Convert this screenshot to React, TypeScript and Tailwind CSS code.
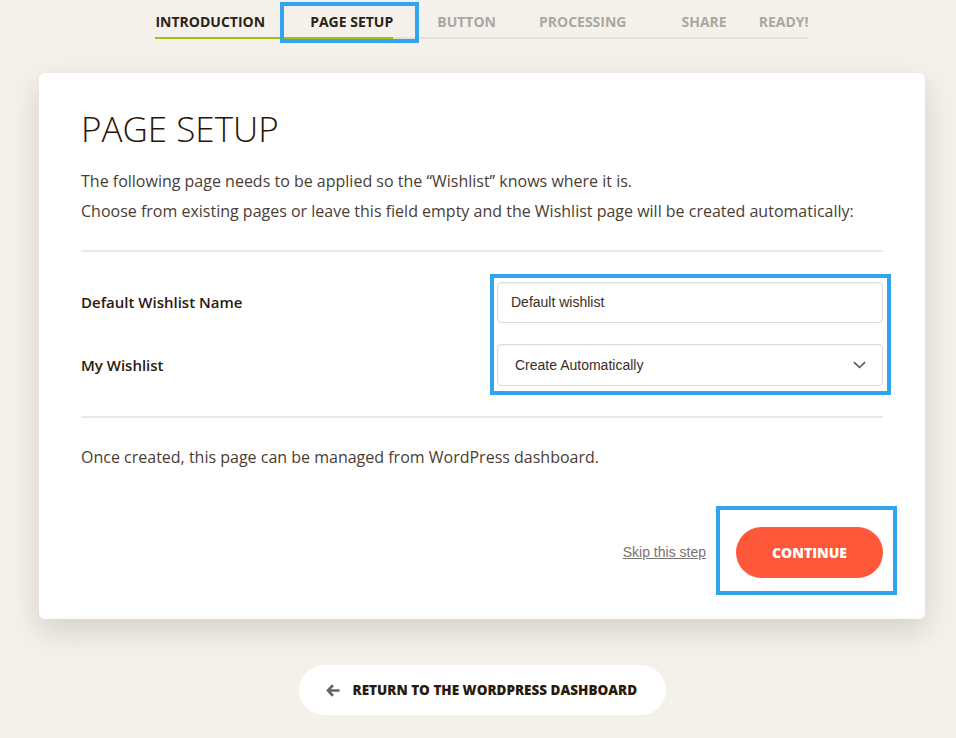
import { ReactNode } from 'react'

const steps = [
  { label: 'INTRODUCTION', pad: 'pl-0', done: true },
  { label: 'PAGE SETUP', pad: 'pl-[45px]', done: true, marked: true },
  { label: 'BUTTON', pad: 'pl-[44px]', done: false },
  { label: 'PROCESSING', pad: 'pl-[43px]', done: false },
  { label: 'SHARE', pad: 'pl-[55px]', done: false },
  { label: 'READY!', pad: 'pl-[32px]', done: false },
]

function Marker({ className }: { className: string }) {
  // blue annotation frame laid over the content
  return <span className={`pointer-events-none absolute border-4 border-[#31a4ee] ${className}`} />
}

function Row({ label, children }: { label: string; children: ReactNode }) {
  return (
    <div className="flex items-center">
      <label className="w-[416px] text-[15px] font-semibold text-[#2b1b0d]">{label}</label>
      <div className="flex-1">{children}</div>
    </div>
  )
}

export default function App() {
  return (
    <div className="min-h-[738px] bg-[#f4f1eb] font-['Open_Sans',sans-serif]">
      <div className="ml-[39px] w-[886px] pt-3">
        <nav className="flex justify-center">
          <div className="flex border-b-2 border-[#e4e2de]">
            {steps.map(step => (
              <div key={step.label} className={`${step.pad} relative -mb-[2px] border-b-2 ${step.done ? 'border-[#a7c10a]' : 'border-transparent'} pb-[5px]`}>
                <span className={`block text-[14px] font-bold leading-5 ${step.done ? 'text-[#2d2218]' : 'text-[#aaa7a3]'}`}>
                  {step.label}
                </span>
                {step.marked && <Marker className="-top-[10px] bottom-[-6px] left-[15px] -right-[26px]" />}
              </div>
            ))}
          </div>
        </nav>

        <main className="mt-[34px] rounded-md bg-white px-[42px] pt-[34px] pb-[41px] shadow-[0_12px_30px_rgba(80,60,30,0.18)]">
          <h1 className="text-[35px] font-light leading-[44px] text-[#2a1606]">PAGE SETUP</h1>
          <div className="mt-[15px] text-[16px] leading-[30px] text-[#4a3d33]">
            <p>The following page needs to be applied so the “Wishlist” knows where it is.</p>
            <p>Choose from existing pages or leave this field empty and the Wishlist page will be created automatically:</p>
          </div>

          <hr className="mt-[24px] border-t-2 border-[#ebe9e6]" />

          <div className="relative mt-[30px] flex flex-col gap-[21px]">
            <Row label="Default Wishlist Name">
              <div className="flex h-[41px] items-center rounded border border-[#dddbd8] pl-[13px] font-['Liberation_Sans',Arial,sans-serif] text-[14px] text-[#3a2e25] shadow-[inset_0_1px_2px_rgba(0,0,0,0.05)]">
                Default wishlist
              </div>
            </Row>
            <Row label="My Wishlist">
              <div className="flex h-[42px] items-center justify-between rounded border border-[#dddbd8] pl-[17px] pr-[16px] font-['Liberation_Sans',Arial,sans-serif] text-[14px] text-[#3a2e25] shadow-[inset_0_1px_2px_rgba(0,0,0,0.05)]">
                <span>Create Automatically</span>
                <svg width="13" height="8" viewBox="0 0 13 8" fill="none" stroke="#5a5550" strokeWidth="1.6">
                  <path d="M1 1.2l5.5 5.3L12 1.2" />
                </svg>
              </div>
            </Row>
            <Marker className="left-[409px] -right-[8px] -top-[8px] -bottom-[9px]" />
          </div>

          <hr className="mt-[30px] border-t-2 border-[#ebe9e6]" />

          <p className="mt-[24px] text-[16px] leading-[30px] text-[#4a3d33]">
            Once created, this page can be managed from WordPress dashboard.
          </p>

          <div className="mt-[55px] flex items-center justify-end gap-[30px]">
            <a href="#" className="font-['Liberation_Sans',Arial,sans-serif] text-[14px] text-[#7a7470] underline">
              Skip this step
            </a>
            <div className="relative">
              <button className="h-[51px] w-[147px] rounded-full bg-[#ff5739] text-[14px] font-extrabold text-white">
                CONTINUE
              </button>
              <Marker className="-left-[20px] -right-[14px] -top-[21px] -bottom-[17px]" />
            </div>
          </div>
        </main>

        <div className="mt-[46px] flex justify-center pb-6">
          <button className="flex h-[50px] w-[367px] items-center gap-[13px] rounded-full bg-white pl-[27px] text-[13.5px] font-extrabold text-[#2a1a0a]">
            <svg width="14" height="13" viewBox="0 0 14 13" fill="#6b625a">
              <path d="M6 0.3L0.2 6.5 6 12.7l1.9-1.9-3-3H13.6V5.2H4.9l3-3z" />
            </svg>
            RETURN TO THE WORDPRESS DASHBOARD
          </button>
        </div>
      </div>
    </div>
  )
}
